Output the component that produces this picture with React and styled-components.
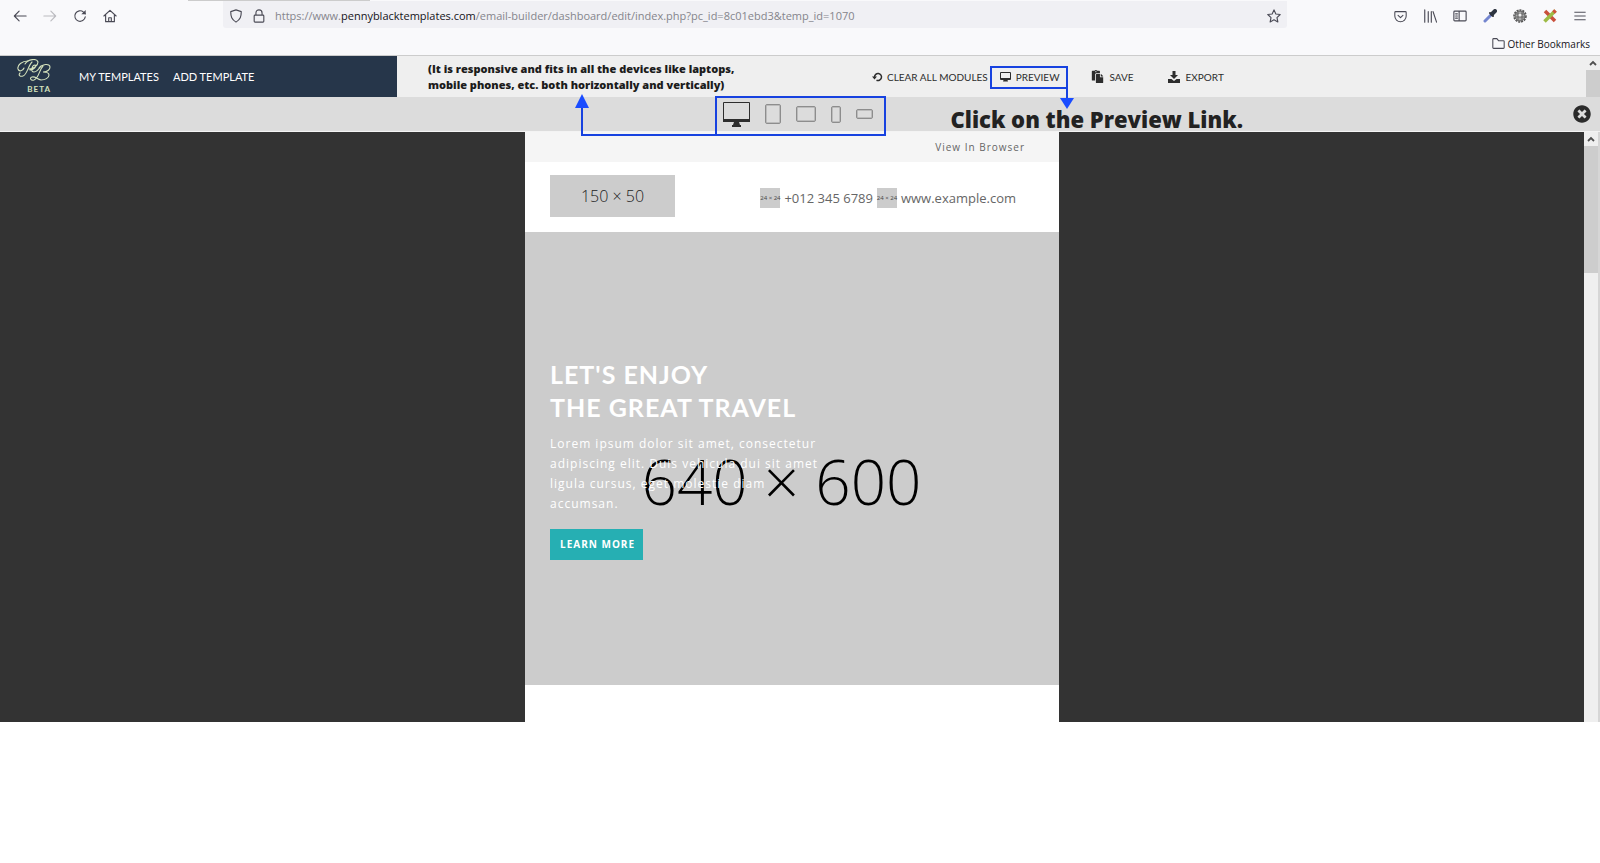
import React from "react";
import styled, { createGlobalStyle, css } from "styled-components";
import { FaPaste, FaTimesCircle } from "react-icons/fa";

const GlobalStyle = createGlobalStyle`
  * {
    box-sizing: border-box;
  }

  body {
    margin: 0;
    background-color: #fff;
    font-family: "Open Sans", sans-serif;
  }

  button {
    font-family: inherit;
    margin: 0;
    padding: 0;
    border: 0;
    background: none;
    cursor: pointer;
  }

  svg {
    display: block;
    flex: none;
  }
`;

/* browser toolbar */

const BrowserBar = styled.div`
  background-color: #f9f9fb;
  border-bottom: 1px solid #ccc;
`;

const TabEdge = styled.div`
  width: 182px;
  height: 1px;
  margin-left: 188px;
  background-color: #ccc;
`;

const BrowserRow = styled.div`
  display: flex;
  align-items: center;
  height: 27px;
  padding-right: 10px;
`;

const NavButtons = styled.div`
  display: flex;
  padding: 3px 0 0 5px;
  width: 223px;
`;

const IconButton = styled.button`
  display: flex;
  align-items: center;
  justify-content: center;
  width: ${(props) => (props.$narrow ? 26 : 30)}px;
  height: 24px;
  color: #4a4a55;
  ${(props) =>
    props.$faded &&
    css`
      color: #bbbbc0;
    `}
`;

const AddressBar = styled.div`
  display: flex;
  flex: 1;
  align-items: center;
  height: 27px;
  padding: 3px 0 0 6px;
  border-radius: 0 0 3px 3px;
  background-color: #f0f0f4;
  color: #4a4a55;
`;

const AddressIcon = styled.span`
  display: flex;
  margin-right: 9px;
`;

const AddressText = styled.div`
  flex: 1;
  font-family: "Open Sans", sans-serif;
  font-size: 11px;
  line-height: 20px;
  white-space: nowrap;
  color: #85858c;
  outline: none;

  b {
    font-weight: 400;
    color: #15141a;
  }
`;

const Extensions = styled.div`
  display: flex;
  padding: 3px 0 0 98px;
  margin-right: -5px;
`;

const BookmarksRow = styled(BrowserRow)`
  justify-content: flex-end;
  padding-top: 4px;
`;

const BookmarkButton = styled.button`
  display: flex;
  align-items: center;
  gap: 3px;
  color: #4a4a55;
  font-size: 10px;
  line-height: 16px;

  span {
    color: #15141a;
  }
`;

/* builder header */

const Header = styled.header`
  display: grid;
  grid-template-columns: 397fr 475fr 714fr 14px;
  height: 41px;
  background-color: #efefef;
`;

const Brand = styled.div`
  display: flex;
  align-items: center;
  background-color: #26364a;
`;

const Logo = styled.a`
  display: flex;
  flex-direction: column;
  align-items: flex-end;
  width: 51px;
  margin-right: 28px;
  padding-top: 2px;
  color: #d5e2bd;
  font-family: "Lato", sans-serif;
  font-size: 8px;
  font-weight: 700;
  line-height: 14px;
  letter-spacing: 1px;
  text-decoration: none;
`;

const MenuLinks = styled.nav`
  display: flex;
  gap: 14px;
`;

const MenuLink = styled.a`
  color: #fff;
  font-family: "Lato", sans-serif;
  font-size: 11px;
  line-height: 20px;
  white-space: nowrap;
  text-decoration: none;
`;

const Note = styled.p`
  margin: 0;
  padding: 5px 0 0 31px;
  color: #1c1c1c;
  font-size: 11px;
  font-weight: 800;
  line-height: 16px;
  white-space: nowrap;
`;

const Actions = styled.div`
  display: flex;
  align-items: flex-start;
  padding-top: 10px;
`;

const ActionButton = styled.button`
  display: flex;
  position: relative;
  align-items: center;
  gap: ${(props) => props.$gap || 6}px;
  height: 23px;
  margin-right: ${(props) => props.$space || 0}px;
  padding-bottom: 2px;
  color: #2d2d2d;
  font-family: "Lato", sans-serif;
  font-size: 10px;
  line-height: 20px;
  white-space: nowrap;
  ${(props) =>
    props.$marked &&
    css`
      padding: 0 6px 2px 8px;
      border: 2px solid #1742e0;
    `}
`;

const ArrowDown = styled.svg`
  position: absolute;
  top: 19px;
  right: -9px;
`;

/* device bar */

const DeviceBar = styled.div`
  display: grid;
  grid-template-columns: 1fr auto 1fr;
  align-items: start;
  height: 35px;
  border-bottom: 1px solid #f3f3f3;
  background-color: #dcdcdc;
`;

const Devices = styled.div`
  display: flex;
  position: relative;
  z-index: 1;
  grid-column: 2;
  align-items: center;
  gap: 15px;
  height: 40px;
  margin-top: -1px;
  padding: 0 11px 4px 6px;
  border: 2px solid #1742e0;
`;

const ArrowUp = styled.svg`
  position: absolute;
  right: 100%;
  bottom: -2px;
`;

const DeviceButton = styled.button`
  display: flex;
  color: ${(props) => (props.$active ? "#2d2d2d" : "#8d8d8d")};
`;

const Hint = styled.div`
  display: flex;
  align-items: flex-start;
  justify-content: space-between;
  padding: 6px 9px 0 65px;
`;

const HintTitle = styled.h1`
  margin: 0;
  color: #222;
  font-size: 22px;
  font-weight: 800;
  line-height: 32px;
  white-space: nowrap;
`;

const CloseButton = styled.button`
  padding-top: 2px;
  color: #2b2b2b;
  font-size: 18px;
`;

/* preview stage */

const Stage = styled.main`
  display: flex;
  background-color: #333;
`;

const Canvas = styled.div`
  display: flex;
  flex: 1;
  justify-content: center;
`;

const Scrollbar = styled.div`
  width: ${(props) => (props.$outer ? 14 : 16)}px;
  border-right: ${(props) => (props.$outer ? "0" : "2px solid #d6d6d6")};
  background-color: #efefef;
`;

const ScrollArrow = styled.button`
  display: flex;
  align-items: center;
  justify-content: center;
  width: 14px;
  height: 14px;
  color: #505050;
`;

const ScrollThumb = styled.div`
  height: ${(props) => props.$size}px;
  background-color: #cdcdcd;
`;

const Email = styled.article`
  width: 534px;
  padding-bottom: 37px;
  background-color: #fff;
`;

const BrowserLink = styled.a`
  display: block;
  padding: 0 34px 0 0;
  background-color: #f5f5f5;
  color: #666;
  font-size: 10px;
  line-height: 30px;
  letter-spacing: 1px;
  text-align: right;
  text-decoration: none;
`;

const EmailHead = styled.div`
  display: flex;
  align-items: center;
  justify-content: space-between;
  height: 70px;
  padding: 0 43px 2px 25px;
`;

const Placeholder = styled.div`
  display: flex;
  align-items: center;
  justify-content: center;
  background-color: #ccc;
  white-space: nowrap;
`;

const LogoPlaceholder = styled(Placeholder)`
  width: 125px;
  height: 42px;
  color: #222;
  font-size: 16px;
  font-weight: 300;
`;

const IconPlaceholder = styled(Placeholder)`
  width: 20px;
  height: 20px;
  color: #444;
  font-size: 6px;
`;

const Contacts = styled.div`
  display: flex;
  align-items: center;
  gap: 4px;
  padding-top: 3px;
  color: #666;
  font-size: 13px;
  line-height: 20px;
  white-space: nowrap;
`;

const Hero = styled.section`
  position: relative;
  padding: 126px 25px 125px;
  background-color: #ccc;
  color: #fff;
`;

const HeroSize = styled.div`
  position: absolute;
  top: 209px;
  left: 0;
  width: 513px;
  color: #000;
  font-size: 62px;
  font-weight: 300;
  line-height: 80px;
  text-align: center;
`;

const HeroContent = styled.div`
  position: relative;
  width: 270px;
`;

const HeroTitle = styled.h2`
  margin: 0 0 10px;
  font-family: "Lato", sans-serif;
  font-size: 25px;
  font-weight: 700;
  line-height: 33px;
  letter-spacing: 1px;
  white-space: nowrap;
`;

const HeroText = styled.p`
  margin: 0 0 15px;
  font-size: 12px;
  line-height: 20px;
  letter-spacing: 1px;
`;

const HeroButton = styled.button`
  height: 31px;
  padding: 0 8px 1px 10px;
  background-color: #26afb3;
  color: #fff;
  font-size: 10px;
  font-weight: 700;
  letter-spacing: 1px;
`;

const LineIcon = ({ size = 14, children }) => (
  <svg
    width={size}
    height={size}
    viewBox="0 0 16 16"
    fill="none"
    stroke="currentColor"
    strokeWidth="1.3"
    strokeLinecap="round"
    strokeLinejoin="round"
  >
    {children}
  </svg>
);

const LogoMark = () => (
  <svg
    width="34"
    height="23"
    viewBox="0 0 34 23"
    fill="none"
    stroke="currentColor"
    strokeWidth="1.1"
    strokeLinecap="round"
  >
    <path d="M11 2C5 2 0 6 1 10c1 3 5 2 6-1M15 3c-4 4-5 13-9 14-3 1-5-1-3-3" />
    <path d="M8 5c3-5 12-6 13-2 0 4-5 7-9 7M13 11c4 0 7-4 5-5-3 0-5 7-1 7 3 0 5-3 7-6" />
    <path d="M26 7c-4 4-4 12-9 14-3 1-5-2-2-3 3-1 5 2 9 3 4 0 8-2 8-5s-3-3-6-3c5 0 7-3 7-5 0-4-8-3-11 1" />
  </svg>
);

const ScrollUp = ({ label }) => (
  <ScrollArrow aria-label={label}>
    <svg width="8" height="6" viewBox="0 0 8 6" fill="none" stroke="currentColor" strokeWidth="1.8">
      <path d="M1 5l3-3 3 3" />
    </svg>
  </ScrollArrow>
);

const BrowserChrome = () => (
  <BrowserBar>
    <TabEdge />
    <BrowserRow>
      <NavButtons>
        <IconButton aria-label="Back">
          <LineIcon>
            <path d="M15 8H2M7 2.5L1.5 8 7 13.5" />
          </LineIcon>
        </IconButton>
        <IconButton aria-label="Forward" $faded>
          <LineIcon>
            <path d="M1 8h13M9 2.5L14.5 8 9 13.5" />
          </LineIcon>
        </IconButton>
        <IconButton aria-label="Reload">
          <LineIcon>
            <path d="M14 9a6 6 0 1 1-2-5.5l2 2" />
            <path d="M14.5 1v5h-5z" fill="currentColor" stroke="none" />
          </LineIcon>
        </IconButton>
        <IconButton aria-label="Home">
          <LineIcon>
            <path d="M1 8l7-6.5L15 8M3 7v7.5h10V7M6.5 14v-4h3v4" />
          </LineIcon>
        </IconButton>
      </NavButtons>
      <AddressBar>
        <AddressIcon>
          <LineIcon>
            <path d="M8 1l6 2c0 6-1 9-6 12C3 12 2 9 2 3z" />
          </LineIcon>
        </AddressIcon>
        <AddressIcon>
          <LineIcon>
            <path d="M3.5 7h9q1 0 1 1v6q0 1-1 1h-9q-1 0-1-1V8q0-1 1-1zM4.5 7V4.5a3.5 3.5 0 0 1 7 0V7" />
          </LineIcon>
        </AddressIcon>
        <AddressText role="textbox" aria-label="Address">
          https://www.<b>pennyblacktemplates.com</b>
          /email-builder/dashboard/edit/index.php?pc_id=8c01ebd3&amp;temp_id=1070
        </AddressText>
        <IconButton aria-label="Bookmark this page" $narrow>
          <LineIcon>
            <path d="M8 1l2.1 4.7 5 .6-3.7 3.5 1 5L8 12.4l-4.4 2.4 1-5L.9 6.3l5-.6z" />
          </LineIcon>
        </IconButton>
      </AddressBar>
      <Extensions>
        <IconButton aria-label="Pocket">
          <LineIcon size={13}>
            <path d="M2 2h12q1 0 1 1v4.5a7 7 0 0 1-14 0V3q0-1 1-1zM5 6.5l3 3 3-3" />
          </LineIcon>
        </IconButton>
        <IconButton aria-label="Library">
          <LineIcon>
            <path d="M2 1v14M6 3v12M9.5 3v12M11.5 3l4 12" />
          </LineIcon>
        </IconButton>
        <IconButton aria-label="Sidebars">
          <LineIcon>
            <path d="M2 2.5h12q1 0 1 1v9q0 1-1 1H2q-1 0-1-1v-9q0-1 1-1zM7 2.5v11M3 5.5h2M3 8h2M3 10.5h2" />
          </LineIcon>
        </IconButton>
        <IconButton aria-label="Colour picker">
          <svg width="14" height="14" viewBox="0 0 14 14" strokeLinecap="round">
            <path d="M2 12l6-6" stroke="#7486cf" strokeWidth="3" />
            <path d="M7 4l3 3" stroke="#333" strokeWidth="2" />
            <path d="M9 5l3-3" stroke="#2e3440" strokeWidth="4" />
          </svg>
        </IconButton>
        <IconButton aria-label="Settings add-on">
          <svg width="14" height="14" viewBox="0 0 14 14" fill="none">
            <circle cx="7" cy="7" r="6" stroke="#555" strokeWidth="1.6" strokeDasharray="2 1" />
            <circle cx="7" cy="7" r="5" fill="#aaa" stroke="#555" />
            <path d="M3 5h8M3 8h8M5 3v8M9 3v8" stroke="#666" />
            <circle cx="7" cy="6" r="1.5" fill="#eee" />
          </svg>
        </IconButton>
        <IconButton aria-label="Design tools">
          <svg width="14" height="14" viewBox="0 0 14 14">
            <path d="M2 2l10 10" stroke="#c9503c" strokeWidth="3.5" />
            <path d="M1.5 12.5l11-11" stroke="#9dbb45" strokeWidth="3.5" />
            <path d="M10.5 3.5l2-2" stroke="#d2503c" strokeWidth="3.5" />
          </svg>
        </IconButton>
        <IconButton aria-label="Menu">
          <LineIcon size={12}>
            <path d="M1 3h14M1 8h14M1 13h14" />
          </LineIcon>
        </IconButton>
      </Extensions>
    </BrowserRow>
    <BookmarksRow>
      <BookmarkButton>
        <LineIcon size={13}>
          <path d="M1 3q0-1 1-1h4l2 2.5h6q1 0 1 1V13q0 1-1 1H2q-1 0-1-1z" />
        </LineIcon>
        <span>Other Bookmarks</span>
      </BookmarkButton>
    </BookmarksRow>
  </BrowserBar>
);

const BuilderHeader = () => (
  <Header>
    <Brand>
      <Logo href="#home">
        <LogoMark />
        BETA
      </Logo>
      <MenuLinks>
        <MenuLink href="#templates">MY TEMPLATES</MenuLink>
        <MenuLink href="#add">ADD TEMPLATE</MenuLink>
      </MenuLinks>
    </Brand>
    <Note>
      (It is responsive and fits in all the devices like laptops,
      <br />
      mobile phones, etc. both horizontally and vertically)
    </Note>
    <Actions>
      <ActionButton $gap={4} $space={2}>
        <svg width="11" height="10" viewBox="0 0 11 10" fill="none">
          <path d="M2.5 6V5a3.5 3.5 0 1 1 2 3.2" stroke="currentColor" strokeWidth="1.5" />
          <path d="M0 4.5h5L2.5 7.5z" fill="currentColor" />
        </svg>
        CLEAR ALL MODULES
      </ActionButton>
      <ActionButton $marked $gap={5} $space={23}>
        <svg width="11" height="10" viewBox="0 0 11 10" fill="currentColor" fillRule="evenodd">
          <path d="M1 0h9q1 0 1 1v6q0 1-1 1H7.5l.5 1.5H3L3.5 8H1Q0 8 0 7V1q0-1 1-1zm0 1v5h9V1z" />
        </svg>
        PREVIEW
        <ArrowDown width="16" height="22" viewBox="0 0 16 22">
          <path d="M8 0v13" stroke="#1742e0" strokeWidth="2" />
          <path d="M1 11h14L8 22z" fill="#1a4cff" />
        </ArrowDown>
      </ActionButton>
      <ActionButton $space={34}>
        <FaPaste size={13} />
        SAVE
      </ActionButton>
      <ActionButton>
        <svg width="12" height="12" viewBox="0 0 12 12" fill="currentColor">
          <path d="M4.5 0h3v4H10L6 8 2 4h2.5z" />
          <path d="M0 8h3.5L6 10l2.5-2H12v4H0z" />
        </svg>
        EXPORT
      </ActionButton>
    </Actions>
    <Scrollbar $outer>
      <ScrollUp label="Scroll page up" />
      <ScrollThumb $size={27} />
    </Scrollbar>
  </Header>
);

// tablets and phones share one outline, only the proportions differ
const outlines = [
  { label: "Tablet portrait", width: 16, height: 20 },
  { label: "Tablet landscape", width: 20, height: 16 },
  { label: "Phone portrait", width: 10, height: 17 },
  { label: "Phone landscape", width: 17, height: 10 },
];

const DeviceOutline = ({ width, height }) => (
  <svg width={width} height={height} fill="none" stroke="currentColor">
    <rect x="0.5" y="0.5" width={width - 1} height={height - 1} rx="1.5" />
    <rect x="1.5" y="1.5" width={width - 3} height={height - 3} strokeOpacity="0.4" />
  </svg>
);

const DeviceToolbar = () => (
  <DeviceBar>
    <Devices>
      <ArrowUp width="143" height="42" viewBox="0 0 143 42">
        <path d="M143 41H8V12" fill="none" stroke="#1742e0" strokeWidth="2" />
        <path d="M1 14h14L8 0z" fill="#1a4cff" />
      </ArrowUp>
      <DeviceButton aria-label="Desktop" $active>
        <svg width="27" height="25" viewBox="0 0 27 25" fill="currentColor">
          <path d="M1 0h25q1 0 1 1v19H0V1q0-1 1-1zm0 1v16h25V1z" fillRule="evenodd" />
          <path d="M11 20h5l1 3h1v2H9v-2h1z" />
        </svg>
      </DeviceButton>
      {outlines.map((e) => (
        <DeviceButton key={e.label} aria-label={e.label}>
          <DeviceOutline width={e.width} height={e.height} />
        </DeviceButton>
      ))}
    </Devices>
    <Hint>
      <HintTitle>Click on the Preview Link.</HintTitle>
      <CloseButton aria-label="Close preview">
        <FaTimesCircle />
      </CloseButton>
    </Hint>
  </DeviceBar>
);

const EmailPreview = () => (
  <Email>
    <BrowserLink href="#browser">View In Browser</BrowserLink>
    <EmailHead>
      <LogoPlaceholder>150 × 50</LogoPlaceholder>
      <Contacts>
        <IconPlaceholder>24 × 24</IconPlaceholder>
        <span>+012 345 6789</span>
        <IconPlaceholder>24 × 24</IconPlaceholder>
        <span>www.example.com</span>
      </Contacts>
    </EmailHead>
    <Hero>
      <HeroSize>640 × 600</HeroSize>
      <HeroContent>
        <HeroTitle>
          LET'S ENJOY
          <br />
          THE GREAT TRAVEL
        </HeroTitle>
        <HeroText>
          Lorem ipsum dolor sit amet, consectetur adipiscing elit. Duis vehicula
          dui sit amet ligula cursus, eget molestie diam accumsan.
        </HeroText>
        <HeroButton>LEARN MORE</HeroButton>
      </HeroContent>
    </Hero>
  </Email>
);

const App = () => (
  <>
    <GlobalStyle />
    <BrowserChrome />
    <BuilderHeader />
    <DeviceToolbar />
    <Stage>
      <Canvas>
        <EmailPreview />
      </Canvas>
      <Scrollbar>
        <ScrollUp label="Scroll preview up" />
        <ScrollThumb $size={127} />
      </Scrollbar>
    </Stage>
  </>
);

export default App;
